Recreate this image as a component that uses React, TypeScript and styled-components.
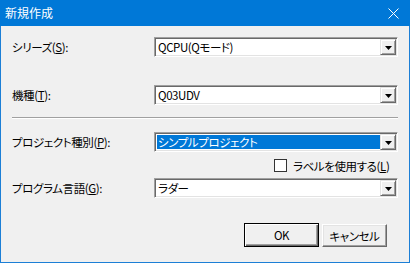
import styled, { createGlobalStyle } from "styled-components";

const GlobalStyle = createGlobalStyle`
  html, body {
    margin: 0;
    padding: 0;
    background: #f0f0f0;
  }
  * {
    box-sizing: border-box;
  }
`;

const fields = [
  { label: "シリーズ", key: "S", value: "QCPU(Qモード)" },
  { label: "機種", key: "T", value: "Q03UDV" },
];

function DropButton() {
  return (
    <Arrow>
      <svg width="7" height="4" viewBox="0 0 7 4">
        <path d="M0 0h7L3.5 4z" fill="#000" />
      </svg>
    </Arrow>
  );
}

function Combo({ value, selected }: { value: string; selected?: boolean }) {
  return (
    <ComboBox>
      <ComboText $selected={selected}>{value}</ComboText>
      <DropButton />
    </ComboBox>
  );
}

function Label({ text, k }: { text: string; k: string }) {
  return (
    <LabelText>
      {text}(<u>{k}</u>):
    </LabelText>
  );
}

export default function App() {
  return (
    <>
      <GlobalStyle />
      <Window>
        <TitleBar>
          <Title>新規作成</Title>
          <Close>
            <svg width="11" height="11" viewBox="0 0 11 11">
              <path d="M0.5 0.5L10.5 10.5M10.5 0.5L0.5 10.5" stroke="#fff" strokeWidth="1" />
            </svg>
          </Close>
        </TitleBar>
        <Body>
          <Row $top={11}>
            <Label text={fields[0].label} k={fields[0].key} />
            <Combo value={fields[0].value} />
          </Row>
          <Row $top={28}>
            <Label text={fields[1].label} k={fields[1].key} />
            <Combo value={fields[1].value} />
          </Row>
          <Separator />
          <Row $top={13}>
            <Label text="プロジェクト種別" k="P" />
            <Combo value="シンプルプロジェクト" selected />
          </Row>
          <CheckRow>
            <CheckBox />
            <span>
              ラベルを使用する(<u>L</u>)
            </span>
          </CheckRow>
          <Row $top={6}>
            <Label text="プログラム言語" k="G" />
            <Combo value="ラダー" />
          </Row>
          <ButtonRow>
            <DefaultButton>OK</DefaultButton>
            <Button>キャンセル</Button>
          </ButtonRow>
        </Body>
      </Window>
    </>
  );
}

const Window = styled.div`
  width: 410px;
  height: 263px;
  border: 1px solid #1c7fd6;
  border-top: none;
  background: #f0f0f0;
  font-family: "Noto Sans CJK JP", "Noto Sans", sans-serif;
  font-feature-settings: "palt" 1;
  font-size: 11.5px;
  letter-spacing: -0.4px;
  color: #000;
  display: flex;
  flex-direction: column;
`;

const TitleBar = styled.div`
  height: 26px;
  margin: 0 -1px;
  background: #0078d7;
  display: flex;
  align-items: center;
  justify-content: space-between;
  padding: 0 0 0 5px;
`;

const Title = styled.div`
  color: #fff;
  font-size: 12px;
  letter-spacing: 0;
  line-height: 1;
  font-feature-settings: normal;
`;

const Close = styled.div`
  width: 34px;
  height: 26px;
  display: flex;
  align-items: center;
  justify-content: center;
`;

const Body = styled.div`
  padding: 0 11px;
  display: flex;
  flex-direction: column;
`;

const Row = styled.div<{ $top: number }>`
  margin-top: ${(p) => p.$top}px;
  display: flex;
  align-items: center;
  height: 20px;
`;

const LabelText = styled.div`
  width: 142px;
  line-height: 16px;
`;

const ComboBox = styled.div`
  width: 244px;
  height: 20px;
  background: #fff;
  border-top: 1px solid #a0a0a0;
  border-left: 1px solid #a0a0a0;
  border-right: 1px solid #fff;
  border-bottom: 1px solid #fff;
  box-shadow: inset 1px 1px 0 #696969, inset -1px -1px 0 #e3e3e3;
  padding: 1px;
  display: flex;
`;

const ComboText = styled.div<{ $selected?: boolean }>`
  flex: 1;
  margin: 1px 0 1px 1px;
  padding-left: 1px;
  height: 14px;
  line-height: 14px;
  background: ${(p) => (p.$selected ? "#0078d7" : "transparent")};
  color: ${(p) => (p.$selected ? "#fff" : "#000")};
  white-space: nowrap;
`;

const Arrow = styled.div`
  width: 16px;
  height: 16px;
  background: #f0f0f0;
  border-top: 1px solid #e3e3e3;
  border-left: 1px solid #e3e3e3;
  border-right: 1px solid #696969;
  border-bottom: 1px solid #696969;
  box-shadow: inset 1px 1px 0 #fff, inset -1px -1px 0 #a0a0a0;
  display: flex;
  align-items: center;
  justify-content: center;
  padding-top: 1px;
`;

const Separator = styled.div`
  margin-top: 12px;
  height: 2px;
  border-top: 1px solid #a0a0a0;
  border-bottom: 1px solid #fff;
`;

const CheckRow = styled.div`
  margin-top: 7px;
  height: 13px;
  display: flex;
  align-items: center;
  gap: 6px;
  padding-left: 262px;
  line-height: 16px;
  white-space: nowrap;
`;

const CheckBox = styled.div`
  width: 13px;
  height: 13px;
  background: #fff;
  border: 1px solid #333;
  flex-shrink: 0;
`;

const ButtonRow = styled.div`
  margin-top: 25px;
  display: flex;
  justify-content: flex-end;
  gap: 3px;
  padding-right: 11px;
`;

const Button = styled.button`
  width: 65px;
  height: 23px;
  margin-top: 1px;
  padding: 0;
  font-family: inherit;
  font-feature-settings: "palt" 1;
  font-size: 11.5px;
  letter-spacing: -0.4px;
  color: #000;
  background: #f0f0f0;
  border-top: 1px solid #fff;
  border-left: 1px solid #fff;
  border-right: 1px solid #696969;
  border-bottom: 1px solid #696969;
  box-shadow: inset -1px -1px 0 #a0a0a0, inset 1px 1px 0 #e3e3e3;
`;

const DefaultButton = styled(Button)`
  width: 75px;
  height: 24px;
  margin-top: 0;
  border: 1px solid #000;
  box-shadow: inset 1px 1px 0 #fff, inset -1px -1px 0 #696969, inset -2px -2px 0 #a0a0a0;
`;
